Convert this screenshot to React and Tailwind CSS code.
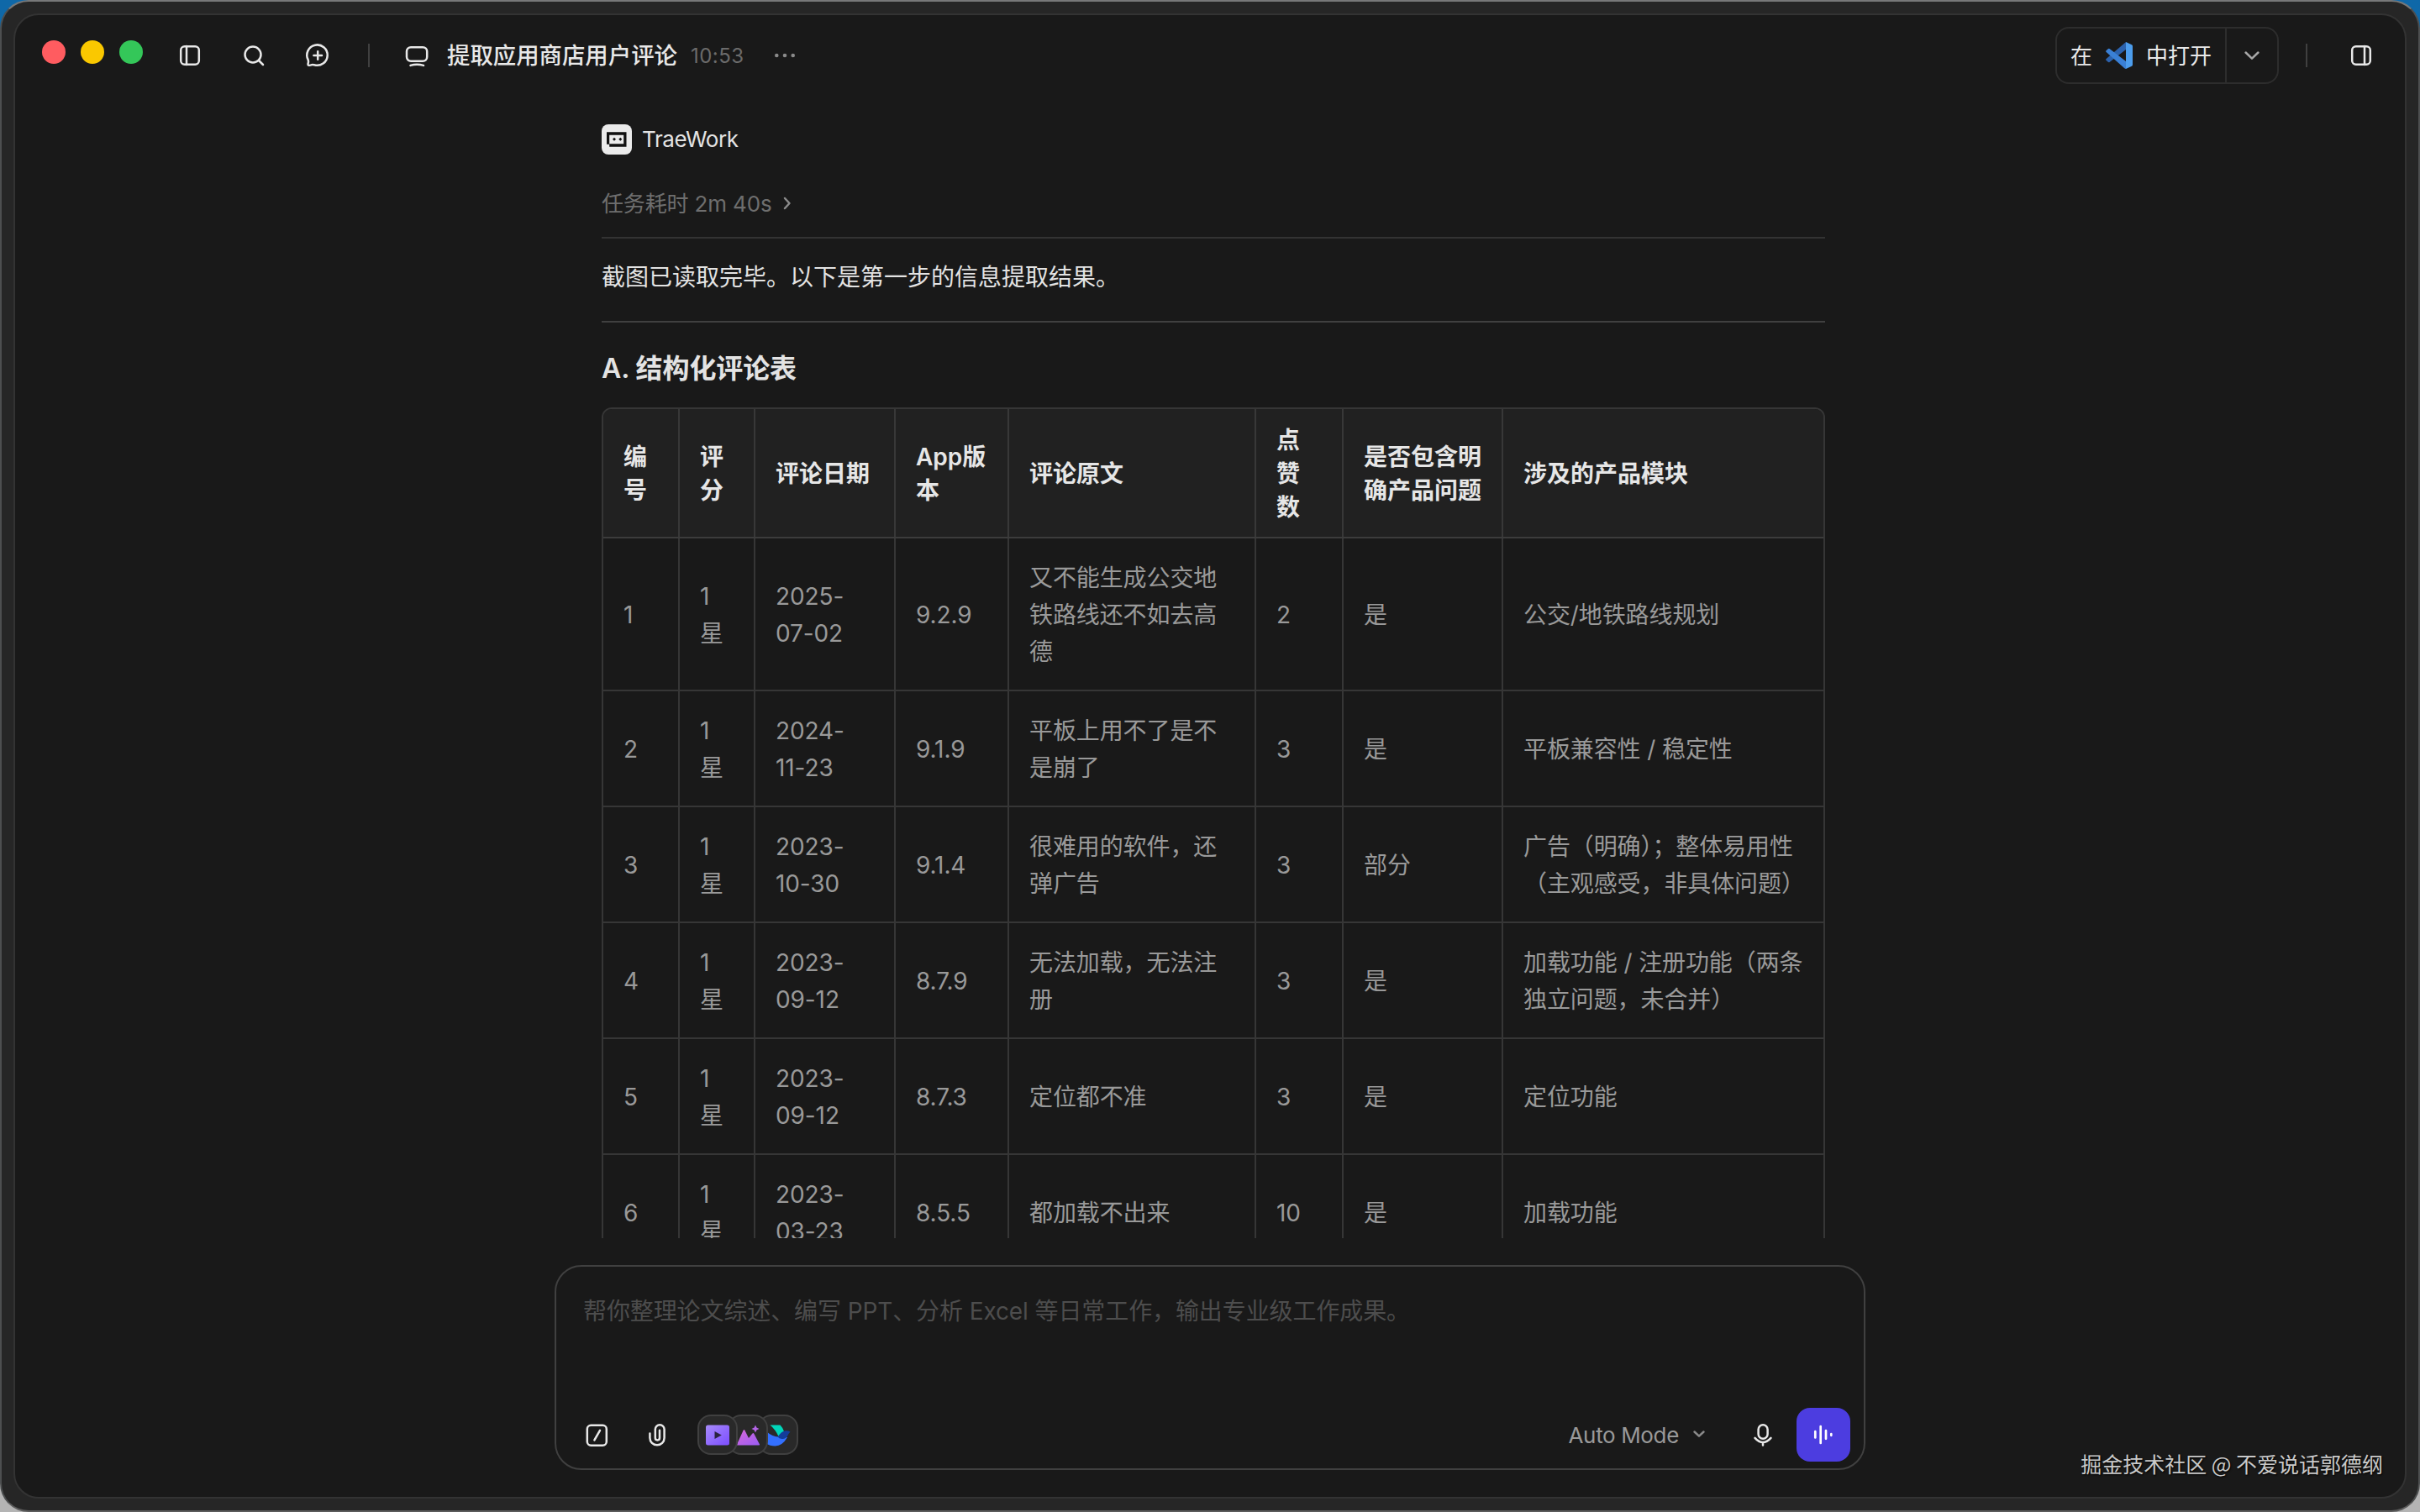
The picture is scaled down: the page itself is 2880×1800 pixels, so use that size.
import React from 'react';

const COLUMNS = ['编\n号', '评\n分', '评论日期', 'App版\n本', '评论原文', '点\n赞\n数', '是否包含明\n确产品问题', '涉及的产品模块'];

const REVIEWS = [
  ['1', '1\n星', '2025-\n07-02', '9.2.9', '又不能生成公交地\n铁路线还不如去高\n德', '2', '是', '公交/地铁路线规划'],
  ['2', '1\n星', '2024-\n11-23', '9.1.9', '平板上用不了是不\n是崩了', '3', '是', '平板兼容性 / 稳定性'],
  ['3', '1\n星', '2023-\n10-30', '9.1.4', '很难用的软件，还\n弹广告', '3', '部分', '广告（明确）；整体易用性\n（主观感受，非具体问题）'],
  ['4', '1\n星', '2023-\n09-12', '8.7.9', '无法加载，无法注\n册', '3', '是', '加载功能 / 注册功能（两条\n独立问题，未合并）'],
  ['5', '1\n星', '2023-\n09-12', '8.7.3', '定位都不准', '3', '是', '定位功能'],
  ['6', '1\n星', '2023-\n03-23', '8.5.5', '都加载不出来', '10', '是', '加载功能'],
];

const GRID = 'grid grid-cols-[91px_90px_167px_135px_294px_104px_190px_381px]';

const Icon = ({ size = 32, className = '', children }) => (
  <svg
    width={size} height={size} viewBox={`0 0 ${size} ${size}`}
    fill="none" stroke="currentColor" strokeWidth="2.5" strokeLinecap="round" strokeLinejoin="round"
    className={`shrink-0 ${className}`}
  >
    {children}
  </svg>
);

const VsCodeLogo = () => (
  <svg width="32" height="32" viewBox="0 0 32 32" className="shrink-0">
    <path d="M24 0 L24 9 L4.5 24 Q3.6 24.6 2.7 23.8 L.5 21.8 Q-.4 20.8.6 19.9 Z" fill="#2c62ad" />
    <path d="M.6 12 Q-.4 11.1.5 10.2 L2.7 8.2 Q3.6 7.4 4.5 8 L24 23 V32 Q23 32 22.3 31.3 Z" fill="#3a80d6" />
    <path d="M24 0 L31 3.3 Q32 3.8 32 5 V27 Q32 28.2 31 28.7 L24 32 Z" fill="#4c9ded" />
  </svg>
);

const TitleBar = () => (
  <header className="flex h-24 shrink-0 items-center pl-8 pr-9 text-[#e8e8e8]">
    <div className="mb-2 flex gap-[18px]">
      <span className="size-7 rounded-full bg-[#ff5c60]" />
      <span className="size-7 rounded-full bg-[#fac800]" />
      <span className="size-7 rounded-full bg-[#34c759]" />
    </div>
    <div className="ml-10 flex gap-11">
      <Icon>
        <rect x="5.200" y="5.200" width="21.600" height="21.600" rx="4.500" />
        <path d="M12 5v22" />
      </Icon>
      <Icon>
        <circle cx="15" cy="15" r="9.5" />
        <path d="M22 22l5 5" />
      </Icon>
      <Icon>
        <path d="M9.2 27.1c-1.6.6-3.2 1-4 .6s-.9-1.5-.3-3.4c.3-1 .1-2-.3-3.2A12.2 12.2 0 1 1 12 27.3c-.9-.4-1.8-.5-2.8-.2z" />
        <path d="M16.2 11.2v9.6M11.4 16h9.6" />
      </Icon>
    </div>
    <span className="ml-11 h-7 w-0.5 bg-[#404040]" />
    <Icon className="ml-10">
      <rect x="4" y="6.2" width="24.2" height="16.6" rx="5" />
      <path d="M8.5 27.9q7.5-2.4 15.5 0" />
    </Icon>
    <h1 className="ml-5 text-[27.4px] font-medium leading-10">提取应用商店用户评论</h1>
    <span className="ml-4 mt-0.5 w-16 text-[24px] leading-10 tracking-[0.5px] text-[#6b6b6b]">10:53</span>
    <Icon className="ml-8 text-[#8a8a8a]">
      <g fill="currentColor" stroke="none">
        <circle cx="6.3" cy="16" r="2.3" />
        <circle cx="16" cy="16" r="2.3" />
        <circle cx="25.7" cy="16" r="2.3" />
      </g>
    </Icon>

    <div className="ml-auto flex h-[68px] w-[266px] rounded-2xl border-2 border-[#2d2d2d]">
      <div className="flex w-[202px] items-center border-r-2 border-[#2d2d2d] pl-4 text-[26px]">
        <span>在</span>
        <span className="mx-4"><VsCodeLogo /></span>
        <span>中打开</span>
      </div>
      <div className="flex flex-1 items-center justify-center text-[#a8a8a8]">
        <Icon><path d="M8.6 12.5l7.4 7.2 7.4-7.2" /></Icon>
      </div>
    </div>
    <span className="ml-8 h-7 w-0.5 bg-[#404040]" />
    <Icon className="ml-12">
      <rect x="5.200" y="5.200" width="21.600" height="21.600" rx="4.500" />
      <path d="M20 5v22" />
    </Icon>
  </header>
);

const ReviewTable = () => (
  <div className="mt-[22px] shrink-0 overflow-hidden rounded-xl border-2 border-[#363636] text-[28px]">
    <div className={`${GRID} h-[154px] border-b-2 border-[#3c3c3c] bg-[#212121] font-semibold leading-10 text-[#e6e6e6]`}>
      {COLUMNS.map((c, i) => (
        <div key={c} className={`flex items-center whitespace-pre pl-6 pt-0.5 ${i < COLUMNS.length - 1 ? 'border-r-2 border-[#383838]' : ''}`}>{c}</div>
      ))}
    </div>
    {REVIEWS.map((row, r) => (
      <div key={row[0]} className={`${GRID} ${r === 0 ? 'h-[182px]' : 'h-[138px]'} border-b-2 border-[#363636] leading-[44px] text-[#999999]`}>
        {row.map((cell, i) => (
          <div key={i} className={`flex items-center whitespace-pre pl-6 pt-0.5 tracking-[-0.1px] ${i < row.length - 1 ? 'border-r-2 border-[#363636]' : ''}`}>{cell}</div>
        ))}
      </div>
    ))}
  </div>
);

const Chat = () => (
  <main className="h-[1360px] shrink-0 overflow-hidden">
    <div className="ml-[698px] flex w-[1456px] flex-col pt-[34px] text-[#e3e3e3]">
      <div className="flex h-9 items-center gap-3">
        <svg width="36" height="36" viewBox="0 0 36 36">
          <rect width="36" height="36" rx="8" fill="#ebebeb" />
          <path fillRule="evenodd" fill="#111111" d="M6 9.3H29.5V26.700H9.2V23.700H6ZM9.2 12.800V23.200H26.200V12.800Z" />
          <path d="M15 15.700l2 2-2 2-2-2zM22.300 15.700l2 2-2 2-2-2z" fill="#111111" />
        </svg>
        <span className="mb-0.5 text-[26px] tracking-[-0.4px]">TraeWork</span>
      </div>
      <div className="mt-[38px] flex h-10 items-center text-[26px] text-[#6e6e6e]">
        <span className="tracking-[-0.15px]">任务耗时 2m 40s</span>
        <Icon size={24} className="ml-1.5 text-[#8a8a8a]"><path d="M9 6l5.500 6-5.500 6" /></Icon>
      </div>
      <div className="mt-5 h-0.5 bg-[#333333]" />
      <p className="mt-6 text-[28px] leading-[44px]">截图已读取完毕。以下是第一步的信息提取结果。</p>
      <div className="mt-[30px] h-0.5 bg-[#404040]" />
      <h2 className="mt-[31px] text-[32px] font-semibold leading-[48px] tracking-[-0.1px]">A. 结构化评论表</h2>
      <ReviewTable />
    </div>
  </main>
);

const Chip = ({ className = '', children }) => (
  <span className={`flex size-12 items-center justify-center rounded-2xl border-2 border-[#404040] bg-[#292929] ${className}`}>
    <svg width="32" height="32" viewBox="0 0 32 32" className="shrink-0">{children}</svg>
  </span>
);

const Composer = () => (
  <section className="mx-auto mt-8 flex h-[244px] w-[1560px] shrink-0 flex-col justify-between rounded-[32px] border-2 border-[#404040] pb-2 pl-8 pr-4 pt-[31px]">
    <p className="text-[28px] leading-[44px] tracking-[-0.1px] text-[#4d4d4d]">帮你整理论文综述、编写 PPT、分析 Excel 等日常工作，输出专业级工作成果。</p>
    <div className="flex h-16 items-center text-[#e8e8e8]">
      <Icon>
        <rect x="4.8" y="4.8" width="23" height="24" rx="4.5" />
        <path d="M20 10.8l-6.6 11.6" />
      </Icon>
      <Icon className="ml-10">
        <path d="M7.4 14.5v5.2a8.6 8.6 0 0 0 17.2 0V9.6a5.4 5.4 0 0 0-10.8 0v10.2a2.6 2.6 0 0 0 5.2 0v-9" />
      </Icon>
      <div className="ml-8 flex">
        <Chip className="z-20">
          <defs>
            <linearGradient id="video" x1="0" y1="0" x2="1" y2="1">
              <stop offset="0" stopColor="#a78bfa" />
              <stop offset="1" stopColor="#7c4dff" />
            </linearGradient>
            <linearGradient id="image" x1="0" y1="0" x2="1" y2="1">
              <stop offset="0" stopColor="#d868d8" />
              <stop offset="1" stopColor="#9a5cf5" />
            </linearGradient>
          </defs>
          <rect x="2" y="4.5" width="28" height="24" rx="2.5" fill="url(#video)" />
          <path d="M12.5 12v9l8.3-4.5z" fill="#2a2340" />
        </Chip>
        <Chip className="z-10 -ml-3">
          <path d="M2.5 28.5L10.5 11q1-1.8 2 0L17 20l4.5-5.5q1-1 1.8.3L30 27.5q.3 1-.8 1z" fill="url(#image)" />
          <path d="M25 4.5l1.4 3.1 3.1 1.4-3.1 1.4L25 13.5l-1.4-3.1-3.1-1.4 3.1-1.4z" fill="#b565e8" />
        </Chip>
        <Chip className="-ml-3">
          <path d="M6.5 4.5h12q3 3 4.5 7.5l-6.5 6Q13 10 6.5 4.5z" fill="#00d6b9" />
          <path d="M2 12q8 7.5 18 6.5l7 .5Q21 29.5 12.5 29.5 6 29.5 2 26.5z" fill="#3370ff" />
          <path d="M15.5 18.5q5-7.500 10-7.300 3 0 5 1.300-2 2-3 4.500-2.500 4.500-7 4-3.500-.5-5-2.500z" fill="#133c9a" />
        </Chip>
      </div>
      <span className="ml-auto text-[26px] tracking-[-0.35px] text-[#999999]">Auto Mode</span>
      <Icon size={24} className="ml-3 text-[#8a8a8a]"><path d="M6.5 8.5l5.500 5.200 5.500-5.200" /></Icon>
      <Icon className="ml-12">
        <rect x="10.6" y="4.2" width="11" height="16.6" rx="5.5" />
        <path d="M6.5 19.8q9.5 10.4 19 0M16 25v3.4" />
      </Icon>
      <button className="ml-6 size-16 rounded-2xl bg-[#4c3de0] text-white">
        <svg width="64" height="64" viewBox="0 0 64 64" stroke="currentColor" strokeWidth="2.7" strokeLinecap="round">
          <path d="M22.3 28.2v7.2M28.7 22v20M35 27.2v9.6M41.3 31.2v1.6" />
        </svg>
      </button>
    </div>
  </section>
);

const App = () => (
  <div className="relative h-[1800px] w-[2880px] overflow-hidden bg-[linear-gradient(to_bottom,#0f68a8_0%,#0f68a8_50%,#b4b4b4_50%)] font-['Inter','Noto_Sans_CJK_SC',sans-serif]">
    <div className="h-full rounded-[34px] border-2 border-x-[#4d4f50] border-b-[#5c5c5c] border-t-[#777879] bg-[#262626] p-[14px]">
      <div className="flex h-full flex-col overflow-hidden rounded-[30px] border-2 border-[#333333] bg-[#191919]">
        <TitleBar />
        <Chat />
        <Composer />
      </div>
    </div>
    <span className="absolute bottom-[38px] right-11 text-[25px] leading-10 text-[#c9c9c9] [text-shadow:1px_1px_2px_#000] font-['Noto_Sans_CJK_SC',sans-serif]">
      掘金技术社区 @ 不爱说话郭德纲
    </span>
  </div>
);

export default App;
